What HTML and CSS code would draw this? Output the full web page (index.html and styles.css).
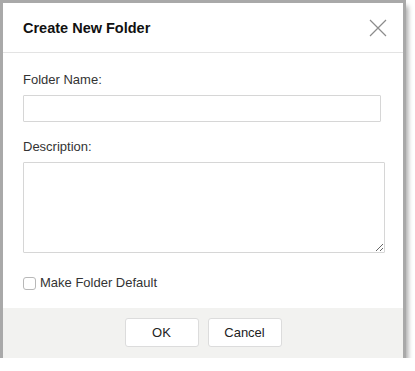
FILE: index.html
```html
<!DOCTYPE html>
<html lang="en">
<head>
  <meta charset="UTF-8">
  <title>Create New Folder</title>
  <link rel="stylesheet" href="styles.css">
</head>
<body>
  <div class="dialog">
    <div class="dialog-header">
      <h3>Create New Folder</h3>
      <span class="close">
        <svg width="18" height="18" viewBox="0 0 18 18"><path d="M1 1 L17 17 M17 1 L1 17" stroke="#8c8c8c" stroke-width="1.2" fill="none"/></svg>
      </span>
    </div>

    <div class="dialog-body">
      <label for="folder-name">Folder Name:</label>
      <input type="text" id="folder-name" class="name-input">

      <label for="folder-desc" class="desc-label">Description:</label>
      <textarea id="folder-desc"></textarea>

      <div class="check-row">
        <input type="checkbox" id="folder-default">
        <label for="folder-default">Make Folder Default</label>
      </div>
    </div>

    <div class="dialog-footer">
      <button>OK</button>
      <button>Cancel</button>
    </div>
  </div>
</body>
</html>
```

FILE: styles.css
```css
* { margin: 0; padding: 0; box-sizing: border-box; }
body { font-family: "Liberation Sans", Arial, sans-serif; background: #fff; color: #333; }

.dialog {
  width: 400px; margin: 3px 0 0 3px; background: #fff;
  box-shadow: 0 0 0 3px #a9a9a9, 4px 4px 5px 1px rgba(0,0,0,0.35);
}

.dialog-header {
  height: 50px; padding: 0 16px 0 20px;
  display: flex; align-items: center; justify-content: space-between;
  border-bottom: 1px solid #e3e3e3;
}
.dialog-header h3 { font-size: 14.5px; font-weight: bold; color: #111; }
.close { display: flex; cursor: pointer; }

.dialog-body { padding: 19px 20px 17px; }
label { display: block; font-size: 13px; line-height: 16px; color: #333; }
.name-input {
  display: block; width: 358px; height: 27px; margin-top: 7px;
  border: 1px solid #d6d6d6; border-radius: 1px;
}
.desc-label { margin-top: 17px; }
textarea {
  display: block; width: 362px; height: 91px; margin-top: 7px;
  border: 1px solid #d6d6d6; border-radius: 1px; resize: vertical;
}

.check-row { display: flex; align-items: center; gap: 4px; margin-top: 22px; }
.check-row input {
  appearance: none; width: 13px; height: 13px;
  border: 1px solid #b8b8b8; border-radius: 3px; background: #fff;
}

.dialog-footer {
  height: 50px; background: #f2f2f0;
  display: flex; justify-content: center; align-items: flex-start;
  gap: 9px; padding-top: 10px;
}
button {
  width: 74px; height: 29px; background: #fff; color: #222;
  border: 1px solid #dcdcdc; border-radius: 3px;
  font-family: inherit; font-size: 13px; cursor: pointer;
}
```
